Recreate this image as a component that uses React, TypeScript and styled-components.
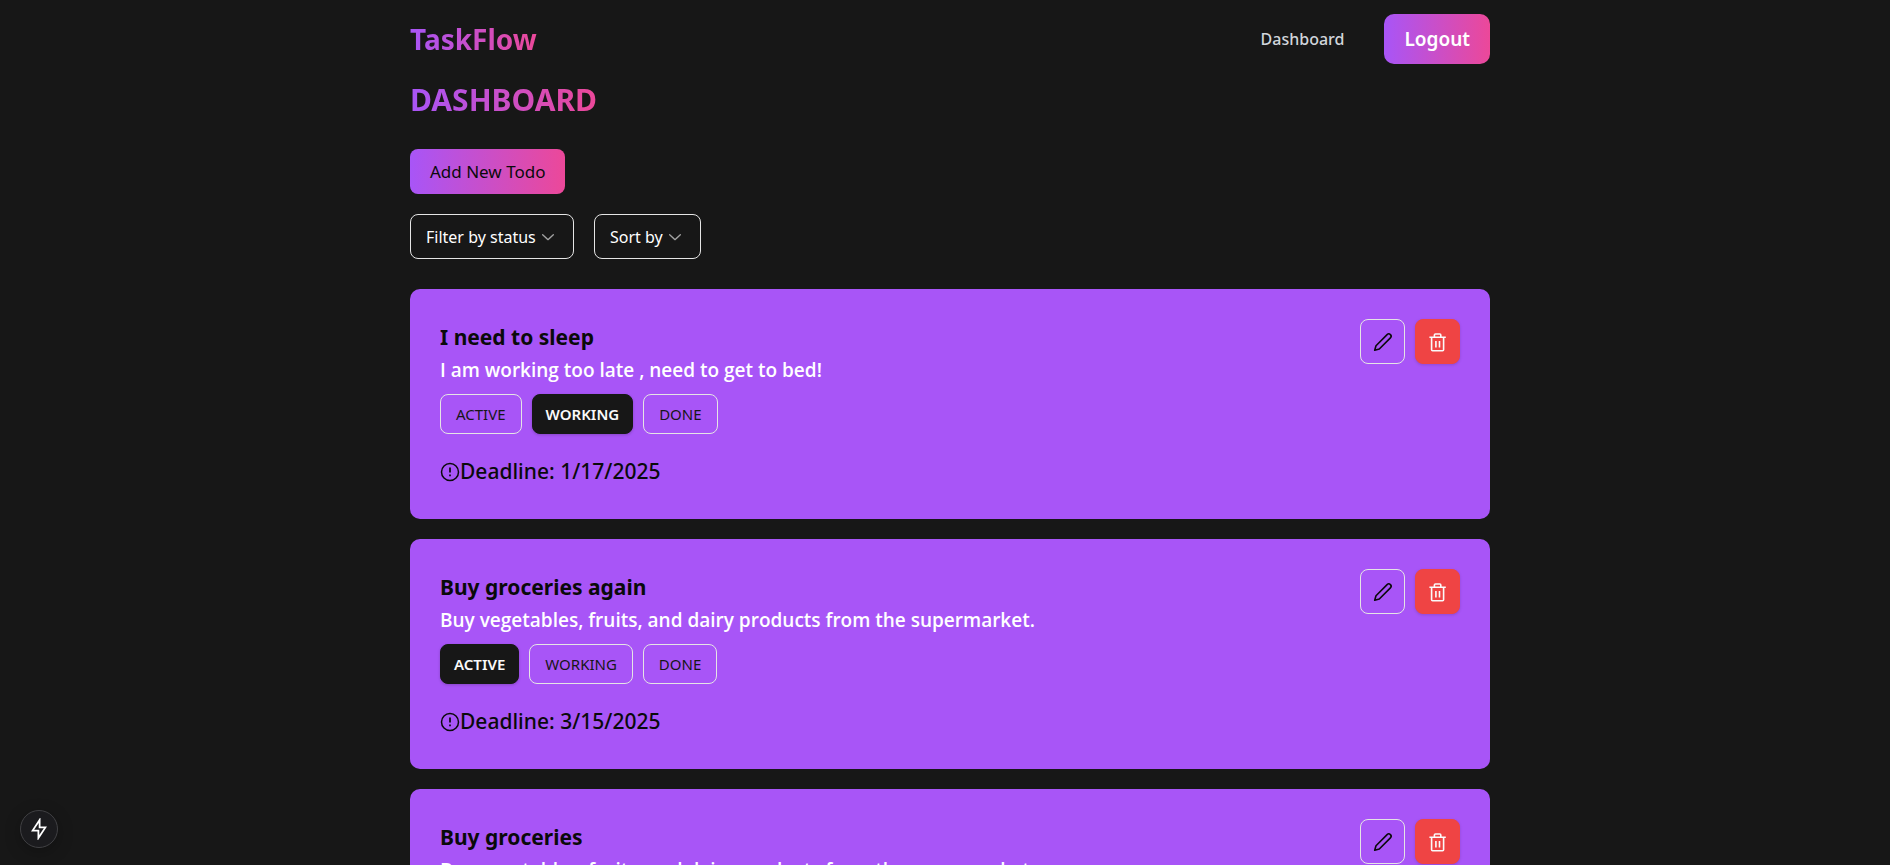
import React, { useState } from "react";
import styled, { createGlobalStyle, css } from "styled-components";

const GlobalStyle = createGlobalStyle`
  *, *::before, *::after { box-sizing: border-box; }
  body {
    margin: 0;
    background: #171717;
    color: #0a0a0a;
    font-family: "Segoe UI", "Noto Sans", "Open Sans", sans-serif;
    font-size: 18px;
  }
  h1, h2, p, ul { margin: 0; padding: 0; }
  button, select { font: inherit; cursor: pointer; }
`;

const accent = "linear-gradient(to right, #a855f7, #ec4899)";

const gradientText = css`
  background: ${accent};
  background-clip: text;
  -webkit-background-clip: text;
  color: transparent;
  font-weight: 700;
  line-height: 44px;
`;

const Page = styled.div`
  height: 100vh;
  overflow-y: auto;
  scrollbar-width: none;
  padding-left: 10px;
`;

const Container = styled.div`
  width: 100%;
  max-width: 1080px;
  margin: 0 auto;
`;

const Header = styled.header`
  display: flex;
  align-items: center;
  justify-content: space-between;
  padding: 14px 0;
`;

const Logo = styled.a`
  ${gradientText}
  font-size: 28px;
  text-decoration: none;
`;

const Nav = styled.nav`
  display: flex;
  align-items: center;
  gap: 40px;
`;

const NavLink = styled.a`
  color: #d1d5db;
  font-size: 16px;
  font-weight: 500;
  text-decoration: none;
`;

const LogoutButton = styled.button`
  height: 50px;
  padding: 0 20px;
  border: 0;
  border-radius: 10px;
  background: ${accent};
  color: #fff;
  font-size: 19px;
  font-weight: 600;
`;

const Main = styled.main`
  display: flex;
  flex-direction: column;
  align-items: flex-start;
  gap: 20px;
`;

const Heading = styled.h1`
  ${gradientText}
  font-size: 30px;
  margin-bottom: 7px;
`;

const AddButton = styled.button`
  height: 45px;
  padding: 0 20px;
  border: 0;
  border-radius: 8px;
  background: ${accent};
  color: #0a0a0a;
  font-size: 17px;
`;

const Filters = styled.div`
  display: flex;
  gap: 20px;
  margin-bottom: 10px;
`;

const SelectBox = styled.label<{ $width: number }>`
  position: relative;
  width: ${(p) => p.$width}px;
  height: 45px;
  color: #fff;

  svg {
    position: absolute;
    top: 12px;
    right: 16px;
    pointer-events: none;
    opacity: 0.6;
  }
`;

const Select = styled.select`
  width: 100%;
  height: 100%;
  padding: 0 15px;
  border: 1px solid #e5e5e5;
  border-radius: 8px;
  appearance: none;
  background: transparent;
  color: #fff;
  font-size: 16px;

  option { color: #0a0a0a; }
`;

const TodoList = styled.ul`
  display: flex;
  flex-direction: column;
  gap: 20px;
  width: 100%;
  list-style: none;
`;

const Card = styled.li`
  display: flex;
  justify-content: space-between;
  align-items: flex-start;
  padding: 30px;
  border-radius: 10px;
  background: #a855f7;
`;

const Title = styled.h2`
  font-size: 21px;
  font-weight: 700;
  line-height: 36px;
`;

const Description = styled.p`
  color: #fff;
  font-family: "Segoe UI", "Open Sans", sans-serif;
  font-size: 19px;
  font-weight: 600;
  line-height: 30px;
`;

const StatusGroup = styled.div`
  display: flex;
  gap: 10px;
  margin-top: 9px;
`;

const StatusButton = styled.button<{ $on: boolean }>`
  height: 40px;
  padding: 0 15px;
  border: 1px solid #e5e5e5;
  border-radius: 8px;
  background: transparent;
  color: #171717;
  font-size: 15px;

  ${(p) =>
    p.$on &&
    css`
      padding: 0 13px;
      border-color: #171717;
      background: #171717;
      color: #fafafa;
      font-weight: 600;
      box-shadow: 0 1px 3px rgba(0, 0, 0, 0.2);
    `}
`;

const Deadline = styled.p`
  display: flex;
  align-items: center;
  margin-top: 20px;
  font-size: 21px;
  font-weight: 500;
  line-height: 35px;
`;

const Actions = styled.div`
  display: flex;
  gap: 10px;
`;

const IconButton = styled.button<{ $danger?: boolean }>`
  display: grid;
  place-items: center;
  width: 45px;
  height: 45px;
  padding: 0;
  border: 1px solid ${(p) => (p.$danger ? "#ef4444" : "#e5e5e5")};
  border-radius: 8px;
  background: ${(p) => (p.$danger ? "#ef4444" : "transparent")};
  color: ${(p) => (p.$danger ? "#fafafa" : "#0a0a0a")};
  box-shadow: ${(p) => (p.$danger ? "0 1px 3px rgba(0, 0, 0, 0.15)" : "none")};
`;

const QuickButton = styled.button`
  position: fixed;
  left: 20px;
  bottom: 17px;
  display: grid;
  place-items: center;
  width: 38px;
  height: 38px;
  padding: 0;
  border: 1px solid #414144;
  border-radius: 50%;
  background: #1b1b1e;
  color: #fff;
  box-shadow: 0 4px 16px rgba(0, 0, 0, 0.25);
`;

const Chevron = () => (
  <svg width="20" height="20" viewBox="0 0 15 15" fill="currentColor" aria-hidden="true">
    <path
      fillRule="evenodd"
      clipRule="evenodd"
      d="M3.135 6.158a.5.5 0 0 1 .707-.023L7.5 9.565l3.658-3.43a.5.5 0 0 1 .684.73l-4 3.75a.5.5 0 0 1-.684 0l-4-3.75a.5.5 0 0 1-.023-.707Z"
    />
  </svg>
);

const AlertIcon = () => (
  <svg width="20" height="20" viewBox="0 0 20 20" fill="none" stroke="currentColor" aria-hidden="true">
    <circle cx="10" cy="10" r="8.5" strokeWidth="1.5" />
    <path d="M10 5.5v5M10 12.5v1.7" strokeWidth="1.7" />
  </svg>
);

const PencilIcon = () => (
  <svg width="20" height="20" viewBox="0 0 20 20" fill="none" stroke="currentColor" strokeWidth="1.6" strokeLinecap="round" strokeLinejoin="round" aria-hidden="true">
    <path d="M14.1 2.6a2.3 2.3 0 0 1 3.3 3.3L6.3 17l-4.6 1.3L3 13.7Z" />
  </svg>
);

const TrashIcon = () => (
  <svg width="20" height="20" viewBox="0 0 20 20" fill="none" stroke="currentColor" strokeWidth="1.6" aria-hidden="true">
    <path d="M1.4 5.3h16.4M6.4 5.3V3q0-1 1-1h4.4q1 0 1 1v2.3M3.6 5.3v12.4q0 1 1 1h10q1 0 1-1V5.3M7.9 9v6.5M11.5 9v6.5" />
  </svg>
);

const BoltIcon = () => (
  <svg width="16" height="22" viewBox="0 0 16 22" fill="none" stroke="currentColor" strokeWidth="1.8" aria-hidden="true">
    <path d="M8.6 2 1.6 12.6h5.8V20l7-10.6H8.6Z" />
  </svg>
);

type Status = "ACTIVE" | "WORKING" | "DONE";
const statuses: Status[] = ["ACTIVE", "WORKING", "DONE"];

interface Todo {
  title: string;
  description: string;
  status: Status;
  deadline: string;
}

const todos: Todo[] = [
  {
    title: "I need to sleep",
    description: "I am working too late , need to get to bed!",
    status: "WORKING",
    deadline: "1/17/2025",
  },
  {
    title: "Buy groceries again",
    description: "Buy vegetables, fruits, and dairy products from the supermarket.",
    status: "ACTIVE",
    deadline: "3/15/2025",
  },
  {
    title: "Buy groceries",
    description: "Buy vegetables, fruits, and dairy products from the supermarket.",
    status: "ACTIVE",
    deadline: "3/15/2025",
  },
];

function TodoCard({ todo }: { todo: Todo }) {
  const [status, setStatus] = useState<Status>(todo.status);
  return (
    <Card>
      <div>
        <Title>{todo.title}</Title>
        <Description>{todo.description}</Description>
        <StatusGroup>
          {statuses.map((s) => (
            <StatusButton key={s} type="button" $on={s === status} aria-pressed={s === status} onClick={() => setStatus(s)}>
              {s}
            </StatusButton>
          ))}
        </StatusGroup>
        <Deadline>
          <AlertIcon />
          Deadline: {todo.deadline}
        </Deadline>
      </div>
      <Actions>
        <IconButton type="button" aria-label="Edit">
          <PencilIcon />
        </IconButton>
        <IconButton type="button" aria-label="Delete" $danger>
          <TrashIcon />
        </IconButton>
      </Actions>
    </Card>
  );
}

export default function App() {
  return (
    <Page>
      <GlobalStyle />
      <Container>
        <Header>
          <Logo href="#">TaskFlow</Logo>
          <Nav>
            <NavLink href="#">Dashboard</NavLink>
            <LogoutButton type="button">Logout</LogoutButton>
          </Nav>
        </Header>
        <Main>
          <Heading>DASHBOARD</Heading>
          <AddButton type="button">Add New Todo</AddButton>
          <Filters>
            <SelectBox $width={164}>
              <Select aria-label="Filter by status">
                <option>Filter by status</option>
              </Select>
              <Chevron />
            </SelectBox>
            <SelectBox $width={107}>
              <Select aria-label="Sort by">
                <option>Sort by</option>
              </Select>
              <Chevron />
            </SelectBox>
          </Filters>
          <TodoList>
            {todos.map((todo) => (
              <TodoCard key={todo.title} todo={todo} />
            ))}
          </TodoList>
        </Main>
      </Container>
      <QuickButton type="button" aria-label="Quick actions">
        <BoltIcon />
      </QuickButton>
    </Page>
  );
}
